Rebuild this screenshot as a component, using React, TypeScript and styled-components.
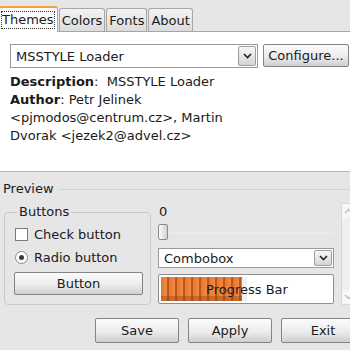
import React from 'react';
import styled, { createGlobalStyle } from 'styled-components';

const GlobalStyle = createGlobalStyle`
  html, body {
    margin: 0;
    padding: 0;
    background: #e6e6e6;
  }
  body {
    font-family: 'DejaVu Sans', 'Liberation Sans', sans-serif;
    font-size: 13px;
    color: #1a1a1a;
  }
`;

const Window = styled.div`
  width: 350px;
  height: 350px;
  overflow: hidden;
  background: #e6e6e6;
  display: flex;
  flex-direction: column;
`;

const TabBar = styled.div`
  height: 31px;
  display: flex;
  align-items: flex-end;
  flex-shrink: 0;
`;

const Tab = styled.div<{ $active?: boolean }>`
  box-sizing: border-box;
  height: ${(p) => (p.$active ? '26px' : '23px')};
  padding: ${(p) => (p.$active ? '0 3px 0 2px' : '0 2px')};
  margin-left: ${(p) => (p.$active ? '-1px' : '1px')};
  display: flex;
  align-items: center;
  border: 1px solid #a6a6a6;
  border-bottom: none;
  border-top: ${(p) => (p.$active ? '2px solid #f2a33a' : '1px solid #a6a6a6')};
  border-radius: 3px 3px 0 0;
  background: ${(p) =>
    p.$active ? '#ffffff' : 'linear-gradient(#f3f3f3, #dcdcdc)'};
  position: relative;
  z-index: ${(p) => (p.$active ? 1 : 0)};
  margin-bottom: ${(p) => (p.$active ? '-1px' : '0')};
  white-space: nowrap;
`;

const FocusText = styled.span`
  outline: 1px dotted #333;
  outline-offset: 0;
  line-height: 16px;
`;

const Panel = styled.div`
  height: 141px;
  box-sizing: border-box;
  background: #ffffff;
  border-top: 1px solid #a6a6a6;
  border-bottom: 1px solid #b4b4b4;
  padding: 12px 0 0 10px;
  flex-shrink: 0;
`;

const Row = styled.div`
  display: flex;
  align-items: flex-start;
  gap: 5px;
`;

const Combo = styled.div<{ $w: number; $h: number }>`
  box-sizing: border-box;
  width: ${(p) => p.$w}px;
  height: ${(p) => p.$h}px;
  border: 1px solid #9a9a9a;
  background: #fff;
  display: flex;
  align-items: center;
  padding: 0 1px 0 5px;
`;

const ComboText = styled.span`
  flex: 1;
  white-space: nowrap;
`;

const ComboArrow = styled.div`
  box-sizing: border-box;
  width: 18px;
  height: calc(100% - 2px);
  border: 1px solid #9e9e9e;
  border-radius: 2px;
  background: linear-gradient(#f7f7f7, #d4d4d4);
  display: flex;
  align-items: center;
  justify-content: center;
`;

const PushButton = styled.div<{ $w: number; $h: number }>`
  box-sizing: border-box;
  width: ${(p) => p.$w}px;
  height: ${(p) => p.$h}px;
  border: 1px solid #858585;
  border-radius: 2px;
  background: linear-gradient(#fbfbfb 0%, #ececec 55%, #cfcfcf 100%);
  display: flex;
  align-items: center;
  justify-content: center;
  white-space: nowrap;
  flex-shrink: 0;
`;

const Info = styled.div`
  margin-top: 5px;
  line-height: 18px;
  white-space: nowrap;
`;

const PreviewHead = styled.div`
  display: flex;
  align-items: center;
  gap: 4px;
  padding: 10px 0 0 3px;
  height: 14px;
  line-height: 14px;
  &::after {
    content: '';
    flex: 1;
    border-top: 1px solid #d2d2d2;
  }
`;

const PreviewBody = styled.div`
  display: flex;
  align-items: flex-start;
  padding: 9px 0 0 4px;
  height: 100px;
`;

const Frame = styled.fieldset`
  box-sizing: border-box;
  width: 146px;
  height: 100px;
  margin: 0;
  padding: 5px 7px 0 9px;
  border: 1px solid #cbcbcb;
  border-radius: 4px;
  display: flex;
  flex-direction: column;
  align-items: flex-start;
  gap: 3px;
`;

const Legend = styled.legend`
  padding: 0 2px;
  margin-left: 3px;
  line-height: 14px;
`;

const CheckRow = styled.div`
  display: flex;
  align-items: center;
  gap: 6px;
  height: 20px;
  padding-left: 1px;
`;

const CheckBox = styled.div`
  box-sizing: border-box;
  width: 13px;
  height: 13px;
  border: 1px solid #7a7a7a;
  background: #fff;
`;

const Radio = styled.div`
  box-sizing: border-box;
  width: 13px;
  height: 13px;
  border: 1px solid #8a8a8a;
  border-radius: 50%;
  background: #fff;
  display: flex;
  align-items: center;
  justify-content: center;
  &::after {
    content: '';
    width: 5px;
    height: 5px;
    border-radius: 50%;
    background: #3a3a3a;
  }
`;

const Middle = styled.div`
  width: 176px;
  margin-left: 7px;
  display: flex;
  flex-direction: column;
`;

const Value = styled.div`
  line-height: 14px;
  padding-left: 1px;
`;

const Slider = styled.div`
  margin-top: 5px;
  height: 16px;
  display: flex;
  align-items: center;
`;

const Handle = styled.div`
  box-sizing: border-box;
  width: 10px;
  height: 16px;
  border: 1px solid #8a8a8a;
  border-radius: 2px;
  background: linear-gradient(90deg, #fafafa, #d2d2d2);
  flex-shrink: 0;
`;

const Track = styled.div`
  flex: 1;
  height: 3px;
  background: #ecebdf;
  border-radius: 1px;
`;

const Progress = styled.div`
  margin-top: 6px;
  box-sizing: border-box;
  height: 30px;
  border: 1px solid #8f8f8f;
  border-radius: 2px;
  background: #fff;
  position: relative;
  padding: 2px;
  display: flex;
`;

const Fill = styled.div`
  width: 81px;
  height: 100%;
  background:
    linear-gradient(transparent 80%, rgba(140, 60, 10, 0.35) 80%),
    repeating-linear-gradient(90deg, #e8782e 0px, #ee8a45 6px, #b8581c 6px, #b8581c 8px);
  box-shadow: 5px 0 0 #f0f0f0;
`;

const ProgressLabel = styled.span`
  position: absolute;
  inset: 0;
  display: flex;
  align-items: center;
  justify-content: center;
  padding-left: 2px;
`;

const ScrollBar = styled.div`
  box-sizing: border-box;
  width: 14px;
  height: 102px;
  margin: -2px 0 0 7px;
  border: 1px solid #d8d8d8;
  background: #efefef;
  display: flex;
  flex-direction: column;
  justify-content: space-between;
  flex-shrink: 0;
`;

const ScrollArrow = styled.div`
  height: 14px;
  display: flex;
  align-items: center;
  justify-content: center;
  background: #f7f7f7;
`;

const Actions = styled.div`
  display: flex;
  gap: 9px;
  padding: 13px 0 0 95px;
`;

const Chevron = () => (
  <svg width="9" height="6" viewBox="0 0 9 6">
    <path d="M1 1 L4.5 4.5 L8 1" fill="none" stroke="#222" strokeWidth="1.6" />
  </svg>
);

const Arrow = ({ up }: { up?: boolean }) => (
  <svg width="9" height="6" viewBox="0 0 9 6">
    <path
      d={up ? 'M1 5 L4.5 1.5 L8 5' : 'M1 1 L4.5 4.5 L8 1'}
      fill="none"
      stroke="#a9c3e0"
      strokeWidth="1.3"
    />
  </svg>
);

export default function App() {
  return (
    <Window>
      <GlobalStyle />
      <TabBar>
        <Tab $active>
          <FocusText>Themes</FocusText>
        </Tab>
        <Tab>Colors</Tab>
        <Tab>Fonts</Tab>
        <Tab>About</Tab>
      </TabBar>
      <Panel>
        <Row>
          <Combo $w={248} $h={24}>
            <ComboText>MSSTYLE Loader</ComboText>
            <ComboArrow>
              <Chevron />
            </ComboArrow>
          </Combo>
          <PushButton $w={86} $h={23}>Configure...</PushButton>
        </Row>
        <Info>
          <b>Description</b>: &nbsp;MSSTYLE Loader
          <br />
          <b>Author</b>: Petr Jelinek
          <br />
          &lt;pjmodos@centrum.cz&gt;, Martin
          <br />
          Dvorak &lt;jezek2@advel.cz&gt;
        </Info>
      </Panel>
      <PreviewHead>Preview</PreviewHead>
      <PreviewBody>
        <Frame>
          <Legend>Buttons</Legend>
          <CheckRow>
            <CheckBox />
            Check button
          </CheckRow>
          <CheckRow>
            <Radio />
            Radio button
          </CheckRow>
          <PushButton $w={129} $h={23} style={{ marginTop: 2 }}>
            Button
          </PushButton>
        </Frame>
        <Middle>
          <Value>0</Value>
          <Slider>
            <Handle />
            <Track />
          </Slider>
          <Combo $w={176} $h={20} style={{ marginTop: 8 }}>
            <ComboText>Combobox</ComboText>
            <ComboArrow>
              <Chevron />
            </ComboArrow>
          </Combo>
          <Progress>
            <Fill />
            <ProgressLabel>Progress Bar</ProgressLabel>
          </Progress>
        </Middle>
        <ScrollBar>
          <ScrollArrow>
            <Arrow up />
          </ScrollArrow>
          <ScrollArrow>
            <Arrow />
          </ScrollArrow>
        </ScrollBar>
      </PreviewBody>
      <Actions>
        <PushButton $w={84} $h={25}>Save</PushButton>
        <PushButton $w={84} $h={25}>Apply</PushButton>
        <PushButton $w={84} $h={25}>Exit</PushButton>
      </Actions>
    </Window>
  );
}
